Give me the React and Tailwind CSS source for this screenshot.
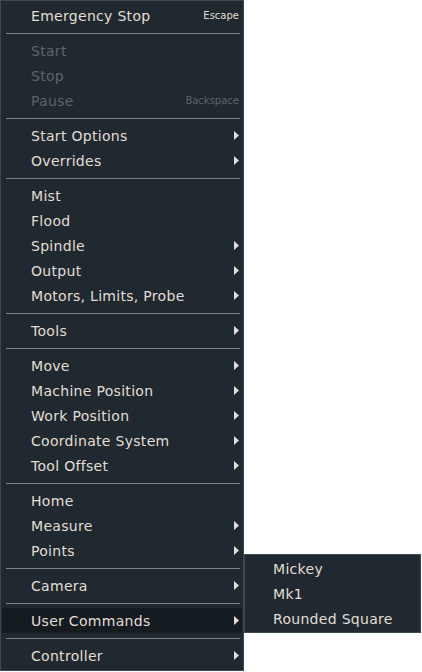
import React from "react";

const font = { fontFamily: '"DejaVu Sans", Verdana, sans-serif' };

const menu = [
  { t: "Emergency Stop", k: "Escape" },
  "sep",
  { t: "Start", d: true },
  { t: "Stop", d: true },
  { t: "Pause", d: true, k: "Backspace" },
  "sep",
  { t: "Start Options", a: true },
  { t: "Overrides", a: true },
  "sep",
  { t: "Mist" },
  { t: "Flood" },
  { t: "Spindle", a: true },
  { t: "Output", a: true },
  { t: "Motors, Limits, Probe", a: true },
  "sep",
  { t: "Tools", a: true },
  "sep",
  { t: "Move", a: true },
  { t: "Machine Position", a: true },
  { t: "Work Position", a: true },
  { t: "Coordinate System", a: true },
  { t: "Tool Offset", a: true },
  "sep",
  { t: "Home" },
  { t: "Measure", a: true },
  { t: "Points", a: true },
  "sep",
  { t: "Camera", a: true },
  "sep",
  { t: "User Commands", a: true, h: true },
  "sep",
  { t: "Controller", a: true },
];

function Arrow() {
  return (
    <svg width="5" height="9" viewBox="0 0 5 9" className="shrink-0">
      <path d="M0 0 L5 4.5 L0 9 Z" fill="#e2ddd5" />
    </svg>
  );
}

function Row({ item }) {
  return (
    <div
      className={
        "h-[25px] flex items-center pl-[29px] pr-[3px] mx-[1px] " +
        (item.h ? "bg-[#151c21]" : "")
      }
    >
      <span
        className={
          "flex-1 text-[14px] tracking-[0.3px] leading-none " +
          (item.d ? "text-[#5c6469]" : "text-[#e2ddd5]")
        }
      >
        {item.t}
      </span>
      {item.k && (
        <span
          className={
            "text-[10px] leading-none " +
            (item.d ? "text-[#5c6469]" : "text-[#e2ddd5]")
          }
        >
          {item.k}
        </span>
      )}
      {item.a && <Arrow />}
    </div>
  );
}

function Sep() {
  return (
    <div className="h-[10px] flex items-center ml-[5px] mr-[3px]">
      <div className="h-px w-full bg-[#7d8387]" />
    </div>
  );
}

export default function App() {
  return (
    <div className="relative w-[422px] h-[672px] bg-white overflow-hidden" style={font}>
      <div className="w-[244px] bg-[#202930] border border-[#3b4952] pt-[2px] pb-[2px]">
        {menu.map((it, i) =>
          it === "sep" ? <Sep key={i} /> : <Row key={i} item={it} />
        )}
      </div>
      <div className="absolute left-[244px] top-[554px] w-[177px] bg-[#202930] border border-[#3b4952] py-[1px]">
        {["Mickey", "Mk1", "Rounded Square"].map((t) => (
          <div key={t} className="h-[25px] flex items-center pl-[28px]">
            <span className="text-[14px] tracking-[0.3px] leading-none text-[#e2ddd5]">{t}</span>
          </div>
        ))}
      </div>
    </div>
  );
}
